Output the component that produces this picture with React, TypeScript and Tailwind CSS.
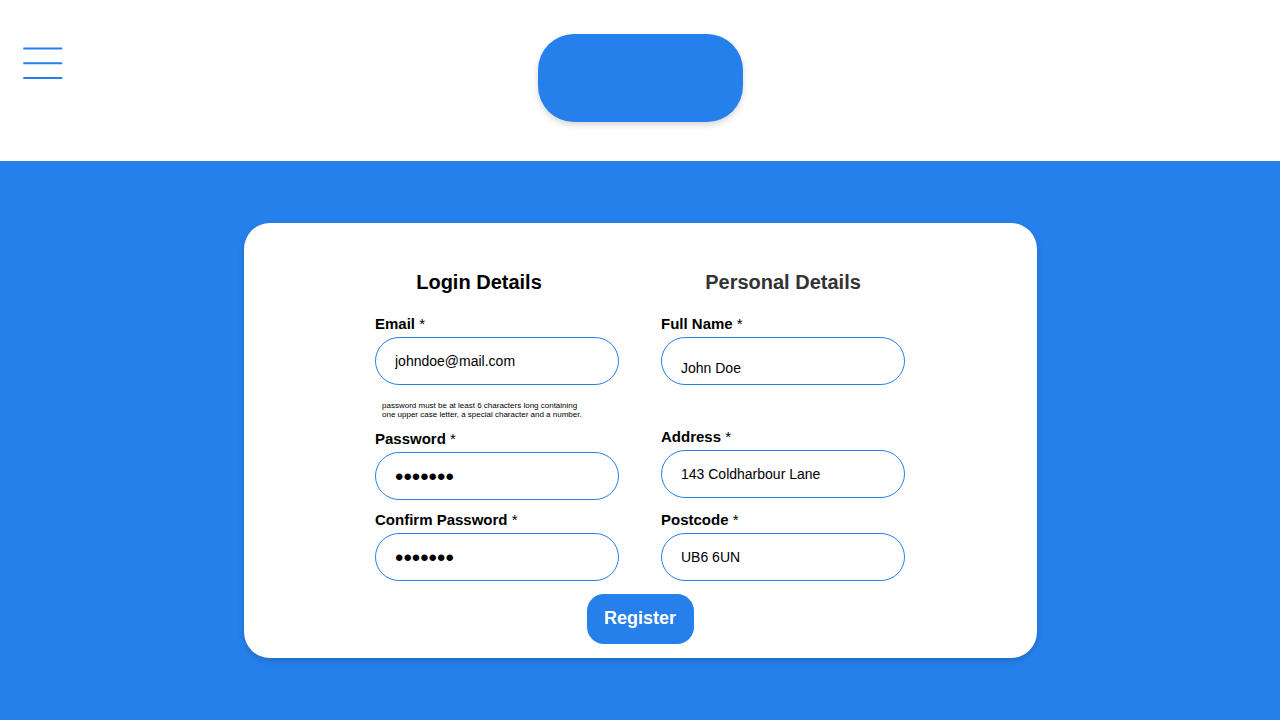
import React from "react";

type FieldProps = {
  id: string;
  label: string;
  value: string;
  type?: string;
  className?: string;
  inputClassName?: string;
};

function Field({ id, label, value, type = "text", className = "", inputClassName = "text-sm" }: FieldProps) {
  return (
    <div className={`flex flex-col gap-[2px] ${className}`}>
      <label htmlFor={id} className="text-[15px] leading-[22px] font-bold text-black">
        {label} <span className="font-normal">*</span>
      </label>
      <input
        id={id}
        type={type}
        defaultValue={value}
        className={`h-12 w-full rounded-full border border-[#2680eb] bg-white px-[19px] text-black outline-none ${inputClassName}`}
      />
    </div>
  );
}

export default function App() {
  return (
    <div className="flex min-h-screen flex-col bg-[#2680eb] font-['Liberation_Sans',Arial,sans-serif]">
      <header className="grid grid-cols-[1fr_auto_1fr] items-start bg-white px-[23px] pt-[34px] pb-[39px]">
        <button type="button" aria-label="Menu" className="mt-[13px] w-10">
          <svg viewBox="0 0 40 32" className="block h-8 w-10" stroke="#2680eb" strokeWidth="2">
            <path d="M0.3 1.5H39.3M0.3 16.3H39.3M0.3 31H39.3" />
          </svg>
        </button>
        <a
          href="#"
          aria-label="Home"
          className="block h-[88px] w-[205px] rounded-[36px] bg-[#2680eb] shadow-[0_3px_6px_rgba(0,0,0,0.16)]"
        />
      </header>

      <main className="flex flex-1 items-start justify-center px-4 py-[62px]">
        <form
          onSubmit={(event) => event.preventDefault()}
          className="flex w-full max-w-[793px] flex-col items-center rounded-[26px] bg-white px-6 pt-[45px] pb-[14px] shadow-[0_3px_6px_rgba(0,0,0,0.16)]"
        >
          <div className="grid w-full max-w-[530px] grid-cols-2 gap-x-[42px]">
            <section className="flex flex-col">
              <h2 className="pr-9 text-center text-xl leading-7 font-bold text-black">Login Details</h2>
              <Field id="email" label="Email" value="johndoe@mail.com" type="email" className="mt-[17px]" />
              <p className="mt-4 pl-[7px] text-[8px] leading-[9px] text-black">
                password must be at least 6 characters long containing
                <br />
                one upper case letter, a special character and a number.
              </p>
              <Field
                id="password"
                label="Password"
                value="Secret1"
                type="password"
                className="mt-[9px]"
                inputClassName="pt-[2px] text-2xl"
              />
              <Field
                id="confirm-password"
                label="Confirm Password"
                value="Secret1"
                type="password"
                className="mt-[9px]"
                inputClassName="pt-[2px] text-2xl"
              />
            </section>

            <section className="flex flex-col">
              <h2 className="text-center text-xl leading-7 font-bold text-[#333333]">Personal Details</h2>
              <Field
                id="full-name"
                label="Full Name"
                value="John Doe"
                className="mt-[17px]"
                inputClassName="pt-[14px] text-sm"
              />
              <Field id="address" label="Address" value="143 Coldharbour Lane" className="mt-[41px]" />
              <Field id="postcode" label="Postcode" value="UB6 6UN" className="mt-[11px]" />
            </section>
          </div>

          <button
            type="submit"
            className="mt-[13px] h-[50px] w-[107px] rounded-[17px] bg-[#2680eb] pb-[2px] text-lg font-bold text-white"
          >
            Register
          </button>
        </form>
      </main>
    </div>
  );
}
